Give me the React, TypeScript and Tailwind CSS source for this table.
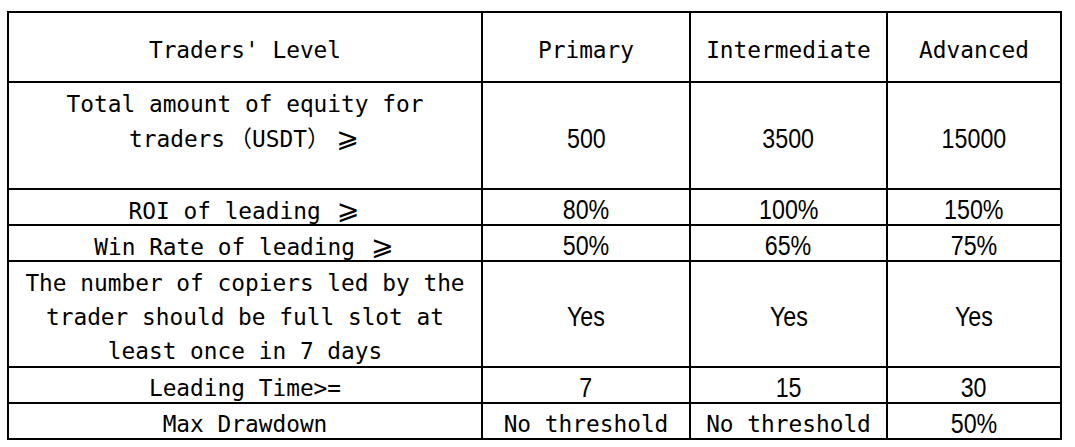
import React from "react";

const mono = "font-['DejaVu_Sans_Mono','Noto_Sans_CJK_SC',monospace] text-[22.8px] leading-[34px]";
const narrow = "font-['Liberation_Sans',Arial,sans-serif] text-[28px] leading-[34px]";

// full-width "greater or equal" as in the original sheet
function Gte() {
  return (
    <span className="inline-block w-[27px] text-center font-['DejaVu_Sans',sans-serif] text-[27px] leading-[34px]">
      ⩾
    </span>
  );
}

// full-width brackets hug the word inside
function Paren({ open }: { open?: boolean }) {
  return (
    <span
      className={`inline-block w-[27px] font-['Noto_Sans_CJK_SC',sans-serif] [text-spacing-trim:space-all] ${
        open ? "text-right" : "text-left"
      }`}
    >
      {open ? "（" : "）"}
    </span>
  );
}

type Row = {
  label: React.ReactNode;
  values: string[];
  height: string;
  top?: boolean;
};

const rows: Row[] = [
  {
    label: (
      <>
        Total amount of equity for
        <br />
        traders<Paren open />USDT<Paren /><Gte />
      </>
    ),
    values: ["500", "3500", "15000"],
    height: "h-[107px]",
    top: true,
  },
  { label: <>ROI of leading <Gte /></>, values: ["80%", "100%", "150%"], height: "h-[36px]" },
  { label: <>Win Rate of leading <Gte /></>, values: ["50%", "65%", "75%"], height: "h-[36px]" },
  {
    label: (
      <>
        The number of copiers led by the
        <br />
        trader should be full slot at
        <br />
        least once in 7 days
      </>
    ),
    values: ["Yes", "Yes", "Yes"],
    height: "h-[106px]",
  },
  { label: "Leading Time>=", values: ["7", "15", "30"], height: "h-[36px]" },
  { label: "Max Drawdown", values: ["No threshold", "No threshold", "50%"], height: "h-[36px]" },
];

function Cell({ children, height, font, top }: { children: React.ReactNode; height: string; font: string; top?: boolean }) {
  return (
    <div
      className={`${height} ${font} flex justify-center text-center whitespace-nowrap border-r-2 border-b-2 border-black text-black ${
        top ? "items-start pt-[4px]" : "items-center pt-[6px]"
      }`}
    >
      <div>{children}</div>
    </div>
  );
}

function Value({ v, height }: { v: string; height: string }) {
  if (v === "No threshold") {
    return <Cell height={height} font={mono}>{v}</Cell>;
  }
  return (
    <Cell height={height} font={narrow}>
      <span className="inline-block scale-x-83">{v}</span>
    </Cell>
  );
}

export default function App() {
  return (
    <div className="w-[1075px] h-[447px] bg-white pl-[7px] pt-[11px]">
      <div className="grid w-[1055px] grid-cols-[474px_208px_197px_174px] border-l-2 border-t-2 border-black">
        <Cell height="h-[70px]" font={mono}>Traders' Level</Cell>
        <Cell height="h-[70px]" font={mono}>Primary</Cell>
        <Cell height="h-[70px]" font={mono}>Intermediate</Cell>
        <Cell height="h-[70px]" font={mono}>Advanced</Cell>

        {rows.map((r, i) => (
          <React.Fragment key={i}>
            <Cell height={r.height} font={mono} top={r.top}>
              {r.label}
            </Cell>
            {r.values.map((v, j) => (
              <Value key={j} v={v} height={r.height} />
            ))}
          </React.Fragment>
        ))}
      </div>
    </div>
  );
}
